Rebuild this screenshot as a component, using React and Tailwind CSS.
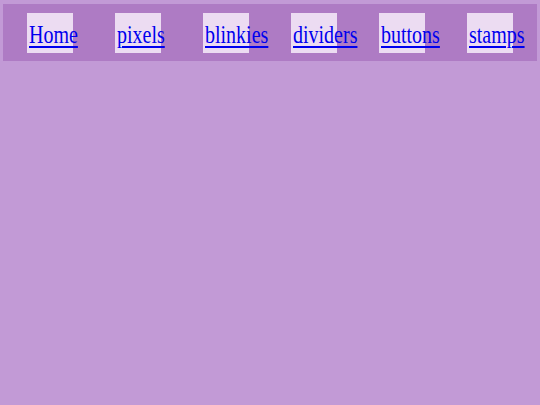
const links = ['Home', 'pixels', 'blinkies', 'dividers', 'buttons', 'stamps'];

export default function App() {
  return (
    <div className="min-h-[405px] w-full bg-[#c29ad6] px-[3px] pt-[4px]" style={{ fontFamily: '"Liberation Serif", serif' }}>
      <nav className="flex h-[57px] items-start gap-[42px] bg-[#ae7bc4] pl-[24px] pt-[9px]">
        {links.map((l) => (
          <div key={l} className="h-[40px] w-[46px] shrink-0 bg-[#ecdcf2] pl-[2px] pt-[10px]">
            <a href="#" className="inline-block origin-left scale-x-[0.8] whitespace-nowrap text-[25px] leading-[24px] text-[#0000ee] underline decoration-2 underline-offset-[3px]">
              {l}
            </a>
          </div>
        ))}
      </nav>
    </div>
  );
}
